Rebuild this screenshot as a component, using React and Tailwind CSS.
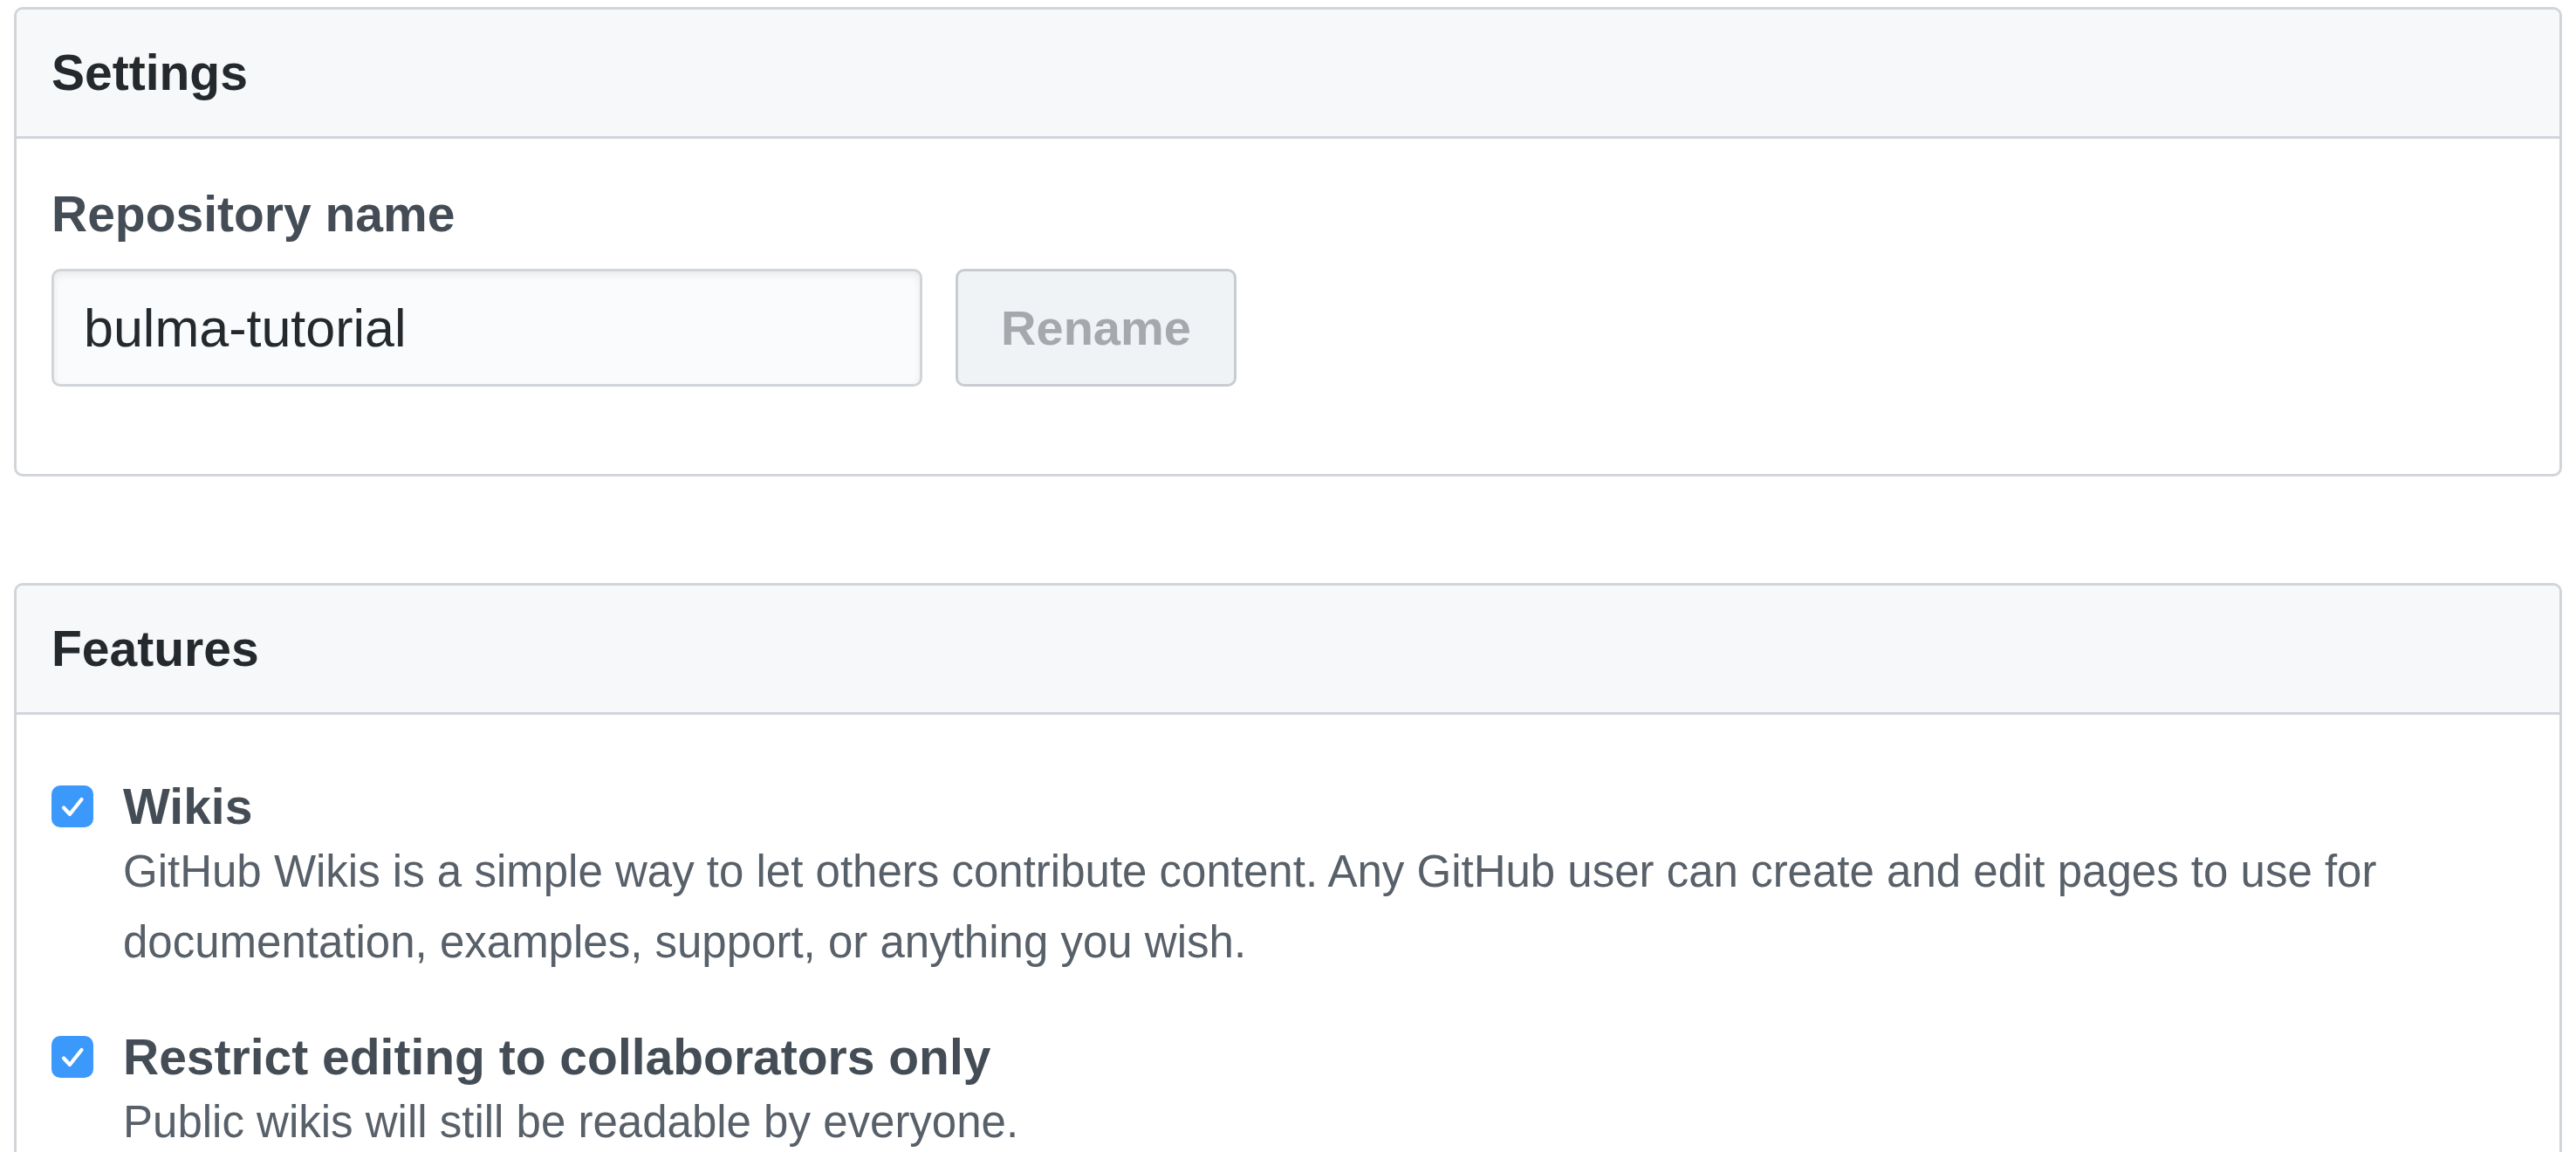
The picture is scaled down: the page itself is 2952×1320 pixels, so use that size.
import React from 'react';

const Box = ({ title, children, className = '' }) => (
  <div className={`overflow-hidden rounded-[10px] border-[3px] border-[#d1d5da] bg-white ${className}`}>
    <div className="flex h-[148px] items-center border-b-[3px] border-[#d1d5da] bg-[#f6f8fa] px-10">
      <h3 className="text-[57px] font-bold leading-none text-[#24292e]">{title}</h3>
    </div>
    {children}
  </div>
);

const CheckItem = ({ label, note, className = '' }) => (
  <div className={`flex items-start gap-[34px] ${className}`}>
    <span className="mt-[10px] flex h-[48px] w-[48px] shrink-0 items-center justify-center rounded-[10px] bg-[#3b99fc]">
      <svg viewBox="0 0 48 48" className="h-[48px] w-[48px]" fill="none">
        <path d="M14 25.5l7 7.5 13.5-17" stroke="white" strokeWidth="4.2" strokeLinecap="round" strokeLinejoin="round" />
      </svg>
    </span>
    <div>
      <div className="text-[57px] font-bold leading-[68px] text-[#444d56]">{label}</div>
      <p className="text-[51px] leading-[81px] text-[#586069]">{note}</p>
    </div>
  </div>
);

export default function App() {
  return (
    <div className="min-h-screen bg-white px-4 pt-2 font-['Liberation_Sans',Arial,sans-serif]">
      <Box title="Settings">
        <div className="px-10 pt-[44px] pb-[100px]">
          <label className="block text-[57px] font-bold leading-[84px] text-[#444d56]">Repository name</label>
          <div className="mt-[21px] flex items-center gap-[38px]">
            <input
              type="text"
              readOnly
              defaultValue="bulma-tutorial"
              className="h-[135px] w-[998px] rounded-[10px] border-[3px] border-[#d1d5da] bg-[#fafbfc] px-[34px] text-[61px] text-[#24292e] shadow-[inset_0_4px_8px_rgba(27,31,35,0.075)] outline-none"
            />
            <button
              type="button"
              disabled
              className="h-[135px] w-[322px] rounded-[10px] border-[3px] border-[#c8ccd1] bg-[#eff3f6] text-[56px] font-bold text-[#a5a9ae]"
            >
              Rename
            </button>
          </div>
        </div>
      </Box>

      <Box title="Features" className="mt-[122px]">
        <div className="px-10 pt-[71px] pb-10">
          <CheckItem
            label="Wikis"
            note="GitHub Wikis is a simple way to let others contribute content. Any GitHub user can create and edit pages to use for documentation, examples, support, or anything you wish."
          />
          <CheckItem
            className="mt-[57px]"
            label="Restrict editing to collaborators only"
            note="Public wikis will still be readable by everyone."
          />
        </div>
      </Box>
    </div>
  );
}
